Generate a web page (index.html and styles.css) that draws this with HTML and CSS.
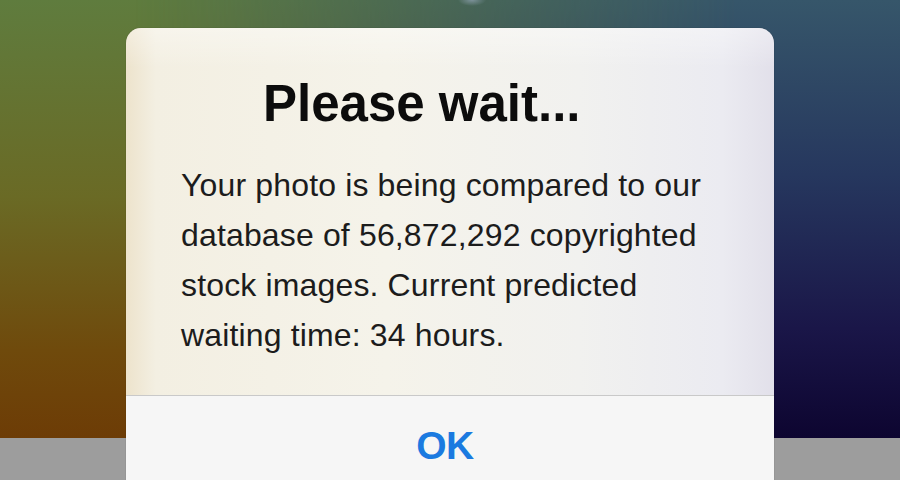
FILE: index.html
```html
<!DOCTYPE html>
<html lang="en">
<head>
    <meta charset="UTF-8">
    <meta name="viewport" content="width=device-width, initial-scale=1.0">
    <title>Please wait</title>
    <link rel="stylesheet" href="styles.css">
</head>
<body>

<div class="screen">
    <div class="wallpaper"></div>
    <div class="toolbar"></div>

    <div class="alert">
        <div class="alert-body">
            <h1 class="alert-title">Please wait...</h1>
            <p class="alert-message">Your photo is being compared to our<br>
                database of 56,872,292 copyrighted<br>
                stock images. Current predicted<br>
                waiting time: 34 hours.</p>
        </div>
        <div class="alert-button">OK</div>
    </div>
</div>

</body>
</html>
```

FILE: styles.css
```css
body {
    margin: 0;
    padding: 0;
    font-family: 'Liberation Sans', Arial, sans-serif;
    overflow: hidden;
}
.screen {
    position: relative;
    width: 900px;
    height: 480px;
    display: flex;
    flex-direction: column;
    overflow: hidden;
}
.wallpaper {
    position: relative;
    height: 438px;
    background:
        radial-gradient(ellipse 14px 6px at 472px 0px, rgba(235, 240, 235, 0.9), rgba(235, 240, 235, 0) 100%),
        linear-gradient(to bottom, #5f7c3e 0%, #6a6a25 45%, #6f4a0c 80%, #6d3c06 100%);
}
/* right half fades into the blue side */
.wallpaper::after {
    content: "";
    position: absolute;
    inset: 0;
    background: linear-gradient(to bottom, #36566a 0%, #26375e 40%, #1a1648 75%, #0d0530 100%);
    -webkit-mask-image: linear-gradient(to right, transparent 15%, rgba(0,0,0,0.55) 50%, #000 82%);
    mask-image: linear-gradient(to right, transparent 15%, rgba(0,0,0,0.55) 50%, #000 82%);
}
.toolbar {
    flex: 1;
    background-color: #9d9d9d;
}
.alert {
    position: absolute;
    top: 28px;
    left: 126px;
    width: 648px;
    bottom: -20px;
    border-radius: 15px;
    overflow: hidden;
    display: flex;
    flex-direction: column;
    box-shadow: 0 0 1px rgba(0, 0, 0, 0.4);
}
.alert-body {
    padding: 46px 0 35px 55px;
    background:
        linear-gradient(to bottom, rgba(255,255,255,0.35) 0px, rgba(255,255,255,0) 40px),
        linear-gradient(to right, #ede3cc 0px, #f3efe2 30px, #f5f3ea 40%, #f1f1ef 70%, #ebebf1 92%, #e2e0ea 100%);
    border-bottom: 1px solid #c9c9c9;
}
.alert-title {
    margin: 0 0 26px 82px;
    font-size: 51px;
    line-height: 60px;
    font-weight: bold;
    color: #0c0c0c;
}
.alert-message {
    margin: 0;
    font-size: 32px;
    line-height: 50px;
    letter-spacing: 0.15px;
    color: #1c1c1c;
}
.alert-button {
    flex: 1;
    background-color: #f6f6f6;
    text-align: center;
    padding-top: 26px;
    padding-right: 10px;
    font-size: 39px;
    line-height: 48px;
    letter-spacing: -0.5px;
    font-weight: bold;
    color: #1b7ae0;
}
```
